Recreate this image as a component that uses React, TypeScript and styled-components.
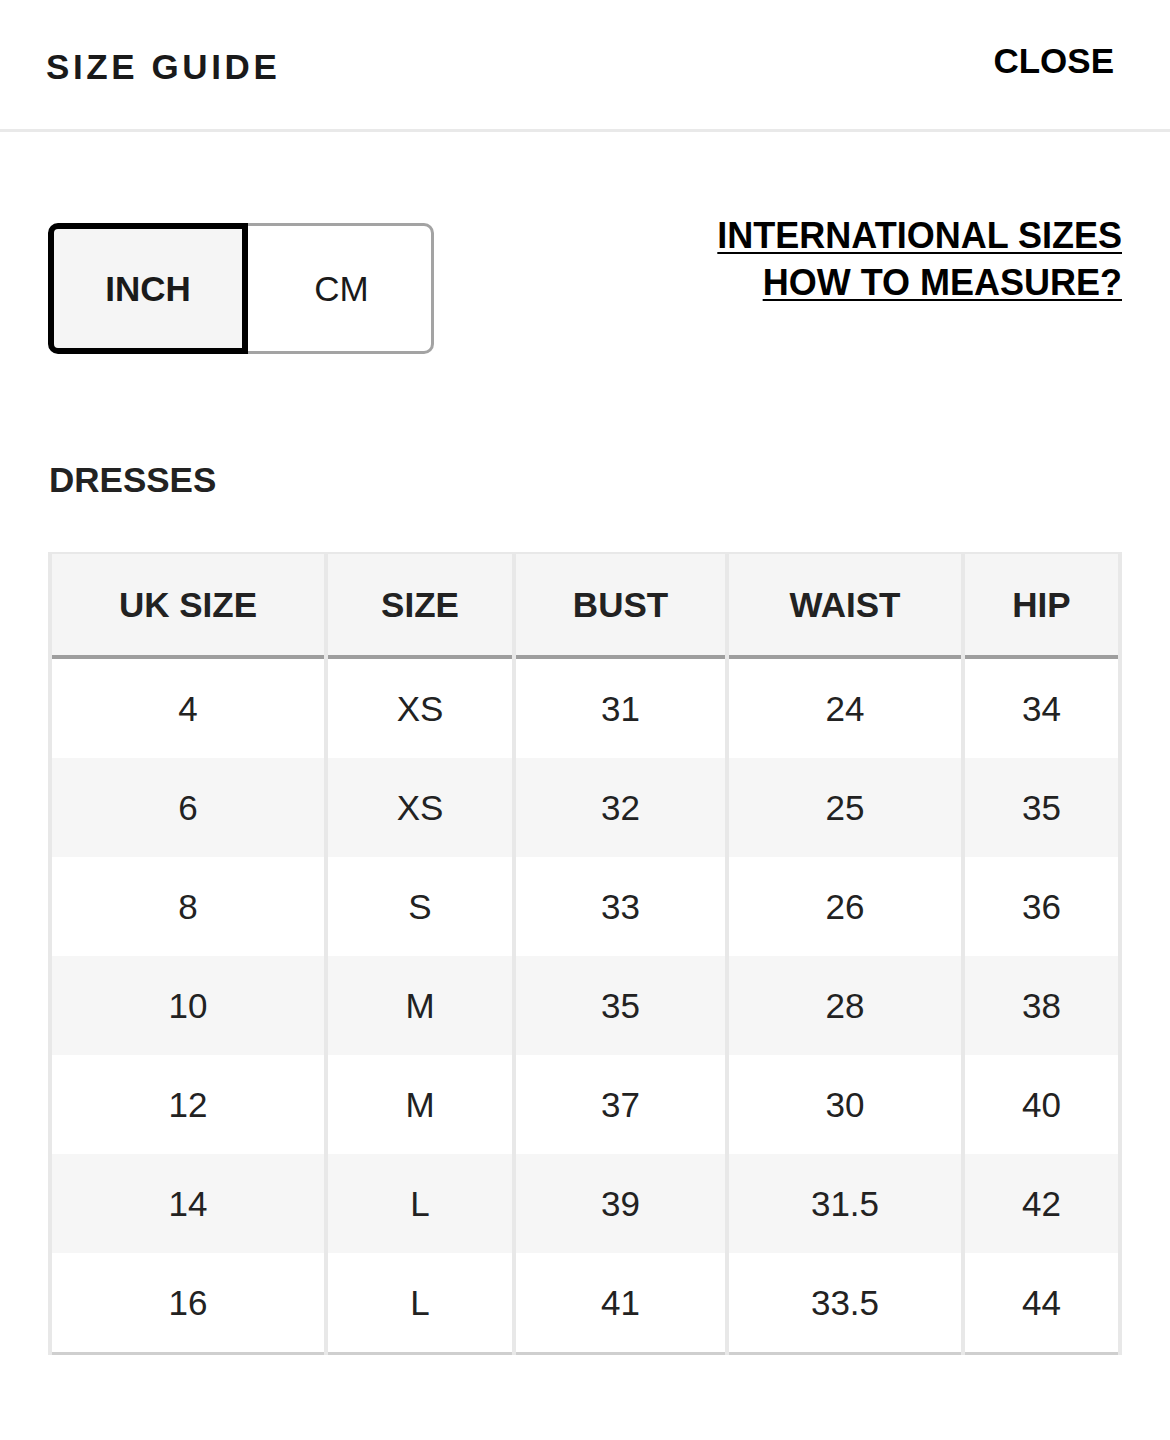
import styled, { createGlobalStyle } from 'styled-components';

const GlobalStyle = createGlobalStyle`
  html, body {
    margin: 0;
    padding: 0;
    background: #fff;
  }
  body {
    font-family: 'Liberation Sans', Arial, Helvetica, sans-serif;
    color: #222;
  }
`;

const rows = [
  ['4', 'XS', '31', '24', '34'],
  ['6', 'XS', '32', '25', '35'],
  ['8', 'S', '33', '26', '36'],
  ['10', 'M', '35', '28', '38'],
  ['12', 'M', '37', '30', '40'],
  ['14', 'L', '39', '31.5', '42'],
  ['16', 'L', '41', '33.5', '44'],
];

const columns = [
  { label: 'UK SIZE', width: 272 },
  { label: 'SIZE', width: 184 },
  { label: 'BUST', width: 209 },
  { label: 'WAIST', width: 232 },
  { label: 'HIP', width: 153 },
];

export default function App() {
  return (
    <>
      <GlobalStyle />
      <Page>
        <Header>
          <Title>SIZE GUIDE</Title>
          <CloseButton>CLOSE</CloseButton>
        </Header>
        <Body>
          <Controls>
            <UnitToggle>
              <UnitButton active>INCH</UnitButton>
              <UnitButton>CM</UnitButton>
            </UnitToggle>
            <Links>
              <LinkText>INTERNATIONAL SIZES</LinkText>
              <LinkText>HOW TO MEASURE?</LinkText>
            </Links>
          </Controls>
          <SectionTitle>DRESSES</SectionTitle>
          <SizeTable>
            <colgroup>
              {columns.map((c) => (
                <col key={c.label} style={{ width: c.width }} />
              ))}
            </colgroup>
            <thead>
              <tr>
                {columns.map((c) => (
                  <HeadCell key={c.label}>{c.label}</HeadCell>
                ))}
              </tr>
            </thead>
            <tbody>
              {rows.map((r, i) => (
                <BodyRow key={r[0]} striped={i % 2 === 1}>
                  {r.map((v, j) => (
                    <BodyCell key={j}>{v}</BodyCell>
                  ))}
                </BodyRow>
              ))}
            </tbody>
          </SizeTable>
        </Body>
      </Page>
    </>
  );
}

const Page = styled.div`
  width: 1170px;
  min-height: 1440px;
  background: #fff;
`;

const Header = styled.header`
  height: 129px;
  box-sizing: content-box;
  display: flex;
  justify-content: space-between;
  align-items: flex-start;
  padding: 0 56px 0 46px;
  border-bottom: 3px solid #e9e9e9;
`;

const Title = styled.h1`
  margin: 47px 0 0;
  font-size: 35px;
  line-height: 40px;
  font-weight: 700;
  letter-spacing: 3.6px;
  color: #1a1a1a;
`;

const CloseButton = styled.button`
  margin-top: 41px;
  padding: 0;
  border: none;
  background: none;
  font-family: inherit;
  font-size: 35px;
  line-height: 40px;
  font-weight: 700;
  color: #000;
  cursor: pointer;
`;

const Body = styled.div`
  padding: 80px 48px 0 48px;
`;

const Controls = styled.div`
  display: flex;
  justify-content: space-between;
  align-items: flex-start;
`;

const UnitToggle = styled.div`
  display: flex;
  margin-top: 11px;
`;

const UnitButton = styled.button<{ active?: boolean }>`
  box-sizing: border-box;
  height: 131px;
  width: ${(p) => (p.active ? '200px' : '186px')};
  font-family: inherit;
  font-size: 35px;
  font-weight: ${(p) => (p.active ? 700 : 400)};
  color: #1a1a1a;
  background: ${(p) => (p.active ? '#f5f5f5' : '#fff')};
  border: ${(p) => (p.active ? '6px solid #000' : '3px solid #a3a3a3')};
  border-left: ${(p) => (p.active ? '6px solid #000' : 'none')};
  border-radius: ${(p) => (p.active ? '10px 0 0 10px' : '0 10px 10px 0')};
  padding: ${(p) => (p.active ? '0' : '0 0 0 4px')};
  cursor: pointer;
`;

const Links = styled.div`
  display: flex;
  flex-direction: column;
  align-items: flex-end;
`;

const LinkText = styled.a`
  font-size: 36px;
  line-height: 47px;
  font-weight: 700;
  color: #000;
  text-decoration: underline;
  text-decoration-thickness: 2px;
  text-underline-offset: 4px;
  cursor: pointer;
`;

const SectionTitle = styled.h2`
  margin: 106px 0 0 1px;
  font-size: 35px;
  line-height: 40px;
  font-weight: 700;
  color: #222;
`;

const SizeTable = styled.table`
  margin-top: 52px;
  border-collapse: separate;
  border-spacing: 4px 0;
  background: #e8e8e8;
  padding: 2px 0 0;
  table-layout: fixed;
  width: 1074px;
`;

const HeadCell = styled.th`
  height: 101px;
  padding: 0;
  background: #f5f5f5;
  border-bottom: 4px solid #9e9e9e;
  font-size: 35px;
  font-weight: 700;
  color: #222;
  text-align: center;
  vertical-align: middle;
`;

const BodyRow = styled.tr<{ striped?: boolean }>`
  background: ${(p) => (p.striped ? '#f6f6f6' : '#fff')};

  &:last-child td {
    border-bottom: 3px solid #cfcfcf;
  }
`;

const BodyCell = styled.td`
  height: 99px;
  padding: 0;
  background: inherit;
  font-size: 35px;
  font-weight: 400;
  color: #222;
  text-align: center;
  vertical-align: middle;
`;
